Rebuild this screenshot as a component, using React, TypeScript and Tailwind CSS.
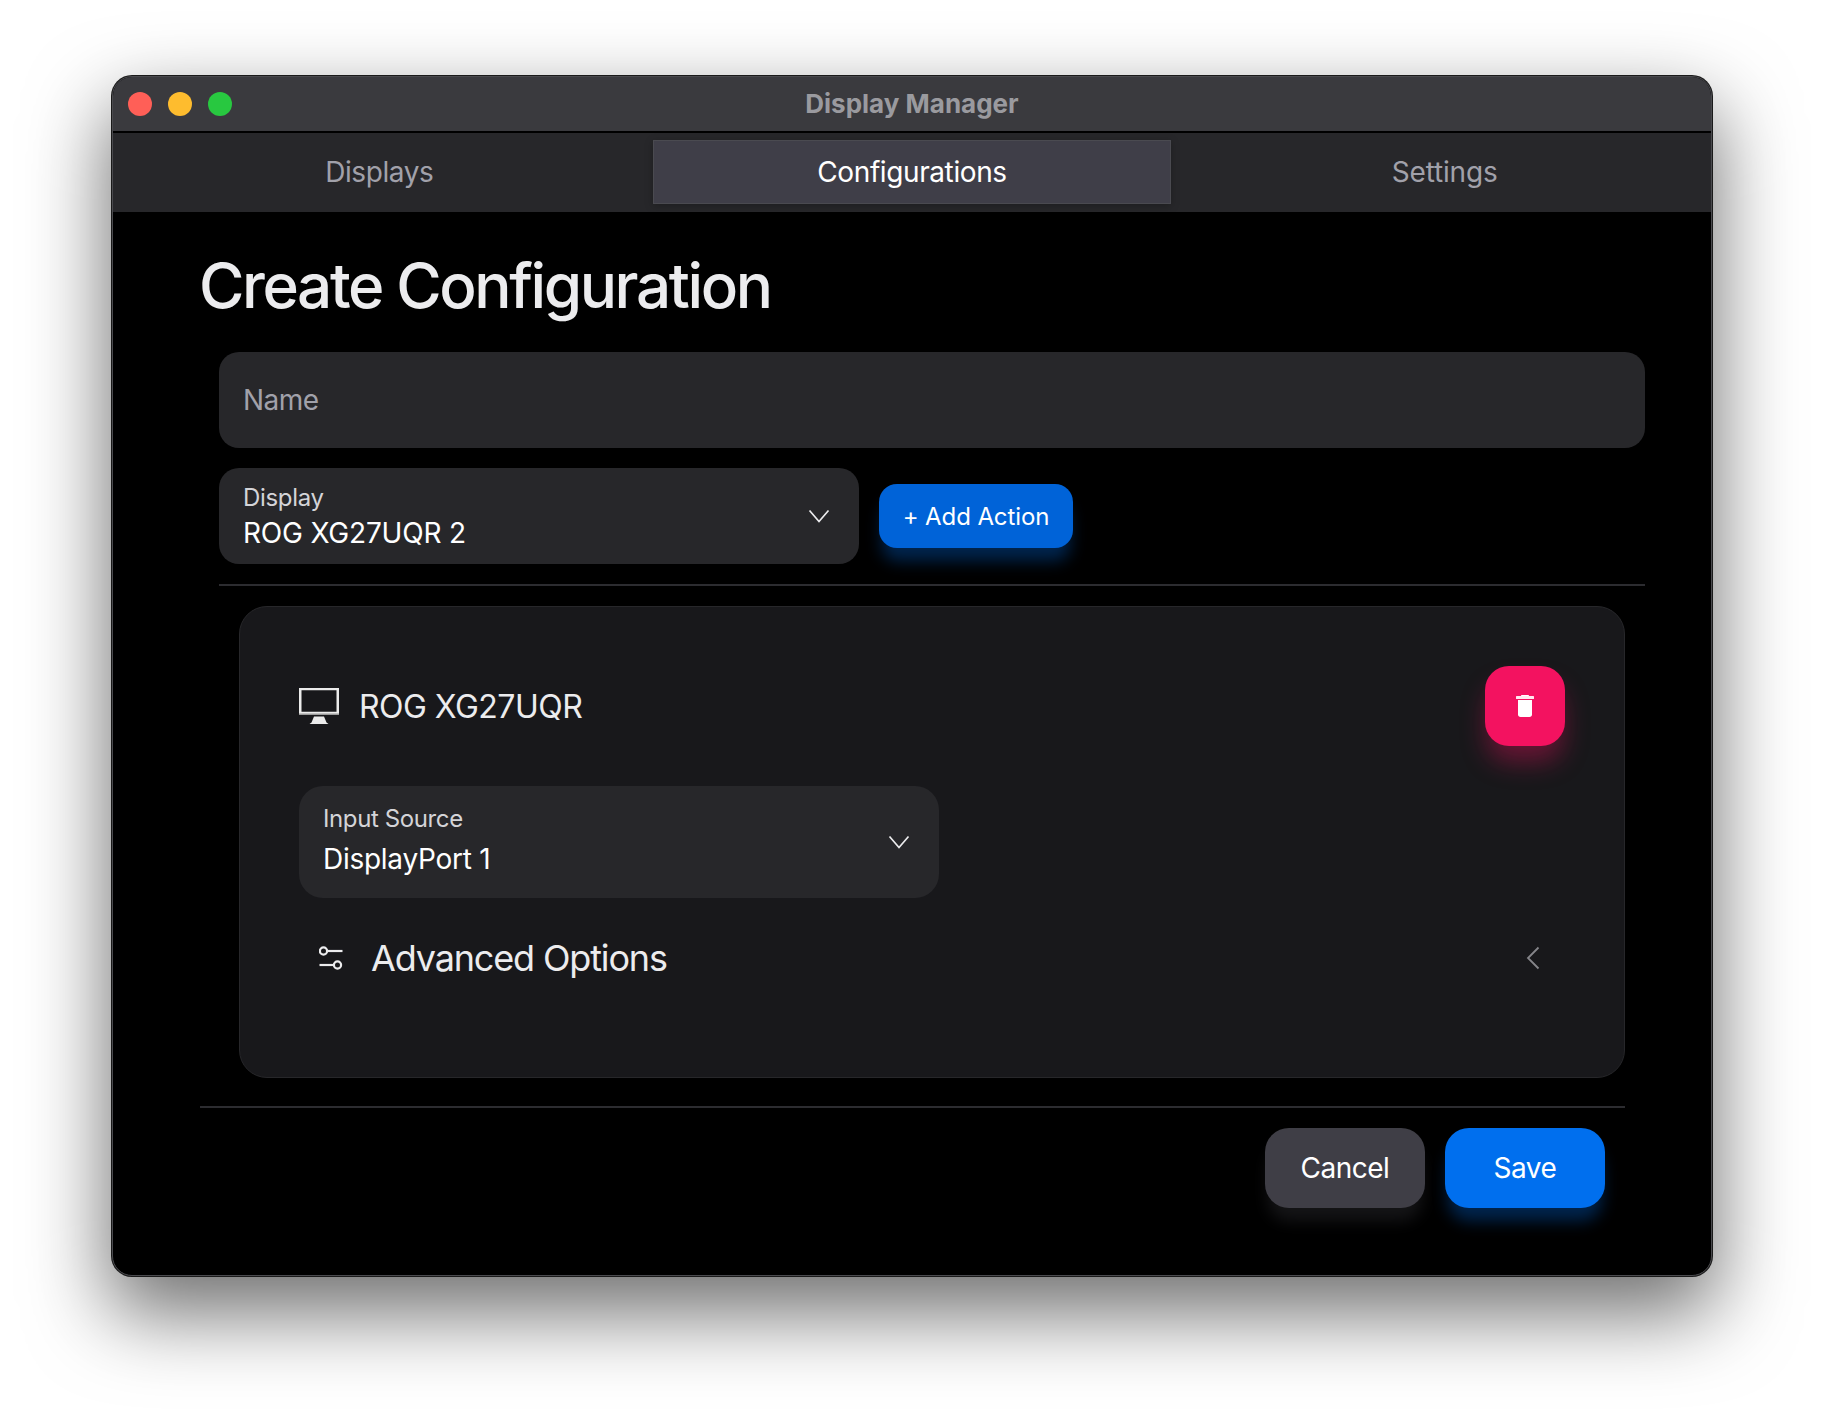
import React from "react";

function Monitor() {
  return (
    <svg width="40" height="36" viewBox="0 0 40 36" fill="none">
      <rect x="0" y="0" width="40" height="1" fill="#8f8f8f" />
      <rect x="1.250" y="1" width="37.500" height="24" stroke="#ebebeb" strokeWidth="2.500" />
      <rect x="0" y="25.500" width="40" height="1.500" fill="#9a9a9a" />
      <path d="M15 28.500h10l2.500 6 2 1.500h-19l2-1.500z" fill="#ebebeb" />
    </svg>
  );
}

function Trash() {
  return (
    <svg width="18" height="22" viewBox="0 0 18 22" fill="#fff">
      <rect x="5" y="0" width="8" height="1.500" rx="0.700" />
      <rect x="0" y="1" width="18" height="3" rx="0.500" fill="#ffe9ef" />
      <path d="M2 5h14v14.500c0 1.400-1 2.500-2.500 2.500h-9C3 22 2 20.900 2 19.500z" />
    </svg>
  );
}

function ChevronDownIcon() {
  return (
    <svg width="24" height="24" viewBox="0 0 24 24" fill="none" stroke="#ececee" strokeWidth="1.700" className="shrink-0">
      <path d="M2.500 6.500 12 17.500 21.500 6.500" />
    </svg>
  );
}

function ChevronLeftIcon() {
  return (
    <svg width="24" height="24" viewBox="0 0 24 24" fill="none" stroke="#85858a" strokeWidth="1.800" className="shrink-0">
      <path d="M17.500 1.500 7 12 17.500 22.500" />
    </svg>
  );
}

function Sliders() {
  return (
    <svg width="24" height="24" viewBox="0 0 24 24" fill="none" stroke="#ececee" strokeWidth="2.200" className="shrink-0">
      <circle cx="4.500" cy="5" r="3.600" />
      <path d="M8.500 5H23.500" />
      <circle cx="18.500" cy="19" r="3.600" />
      <path d="M0.500 19H14.500" />
    </svg>
  );
}

export default function App() {
  return (
    <div className="min-h-screen bg-white pt-[76px] font-['Inter',sans-serif]">
      <div className="mx-auto w-[1600px] h-[1200px] rounded-[20px] overflow-hidden bg-black border border-[#4a4a4e] shadow-[0_0_0_1px_#1a1a1a,0_34px_80px_4px_rgba(0,0,0,0.56)] flex flex-col">
        <div className="relative h-[56px] shrink-0 bg-[#3a3a3e] border-b-2 border-black flex items-center justify-center pb-[2px]">
          <div className="absolute left-[15px] top-[15px] flex gap-[16px]">
            <span className="w-[24px] h-[24px] rounded-full bg-[#ff5f57]" />
            <span className="w-[24px] h-[24px] rounded-full bg-[#febc2e]" />
            <span className="w-[24px] h-[24px] rounded-full bg-[#28c840]" />
          </div>
          <span className="text-[26px] font-bold text-[#9a9a9f]">Display Manager</span>
        </div>
        <div className="h-[79px] shrink-0 bg-[#27272a] grid grid-cols-3 items-center pb-[2px] text-[28px] tracking-[-0.4px]">
          <div className="text-center text-[#a1a1aa]">Displays</div>
          <div className="h-[64px] mx-[7px] bg-[#3f3e48] border border-[#4a4a50] shadow-[0_2px_8px_rgba(0,0,0,0.25)] flex items-center justify-center text-white">Configurations</div>
          <div className="text-center text-[#a1a1aa] tracking-[-0.2px]">Settings</div>
        </div>
        <div className="flex-1 pl-[87px] pr-[86px] flex flex-col">
          <h1 className="mt-[34px] ml-[-1px] text-[62px] leading-[80px] font-[450] text-[#ececee] tracking-[-2.4px]">Create Configuration</h1>
          <div className="mt-[26px] ml-[19px] mr-[-20px] flex flex-col">
            <div className="h-[96px] rounded-[20px] bg-[#27272a] px-[24px] flex items-center text-[28px] tracking-[-0.5px] text-[#a1a1aa]">Name</div>
            <div className="mt-[20px] flex items-center gap-[20px]">
              <div className="w-[640px] h-[96px] rounded-[20px] bg-[#27272a] pl-[24px] pr-[28px] flex items-center justify-between shrink-0">
                <div className="flex flex-col pt-[2px]">
                  <span className="text-[24px] leading-[32px] tracking-[-0.33px] text-[#d4d4d8]">Display</span>
                  <span className="text-[28px] leading-[38px] tracking-[-0.2px] text-white">ROG XG27UQR 2</span>
                </div>
                <ChevronDownIcon />
              </div>
              <button className="h-[64px] w-[194px] pt-[2px] rounded-[18px] bg-[#0063d8] text-[24px] tracking-[-0.1px] text-white shadow-[0_16px_16px_-3px_rgba(0,111,238,0.33)]">+ Add Action</button>
            </div>
            <div className="mt-[20px] h-[2px] bg-[#2c2c30]" />
            <div className="mt-[20px] mx-[20px] h-[472px] rounded-[28px] bg-[#18181b] border border-[#27272a] px-[59px] pt-[59px] flex flex-col">
              <div className="flex items-center justify-between">
                <div className="flex items-center gap-[20px] text-[32px] tracking-[-0.53px] text-[#ececee]">
                  <Monitor />
                  <span className="pt-[2px]">ROG XG27UQR</span>
                </div>
                <button className="w-[80px] h-[80px] rounded-[24px] bg-[#f31260] flex items-center justify-center shadow-[0_18px_26px_-2px_rgba(243,18,96,0.36)]">
                  <Trash />
                </button>
              </div>
              <div className="mt-[40px]">
                <div className="w-[640px] h-[112px] rounded-[24px] bg-[#27272a] pl-[24px] pr-[28px] flex items-center justify-between">
                  <div className="flex flex-col gap-[5px] pb-[4px]">
                    <span className="text-[24px] leading-[32px] tracking-[-0.39px] text-[#d4d4d8]">Input Source</span>
                    <span className="text-[28px] leading-[38px] tracking-[-0.27px] text-white">DisplayPort 1</span>
                  </div>
                  <ChevronDownIcon />
                </div>
              </div>
              <div className="mt-[33px] flex items-center justify-between pl-[20px] pr-[20px]">
                <div className="flex items-center gap-[28px] text-[36px] tracking-[-1.15px] text-[#ececee]">
                  <Sliders />
                  <span>Advanced Options</span>
                </div>
                <ChevronLeftIcon />
              </div>
            </div>
          </div>
          <div className="mt-[28px] h-[2px] bg-[#2c2c30]" />
          <div className="mt-[20px] flex justify-end gap-[20px] pr-[20px]">
            <button className="w-[160px] h-[80px] rounded-[24px] bg-[#3f3e46] text-[28px] tracking-[-0.5px] text-white shadow-[0_16px_16px_-3px_rgba(63,63,70,0.33)]">Cancel</button>
            <button className="w-[160px] h-[80px] rounded-[24px] bg-[#006fee] text-[28px] tracking-[-0.5px] text-white shadow-[0_16px_16px_-3px_rgba(0,111,238,0.33)]">Save</button>
          </div>
        </div>
      </div>
    </div>
  );
}
